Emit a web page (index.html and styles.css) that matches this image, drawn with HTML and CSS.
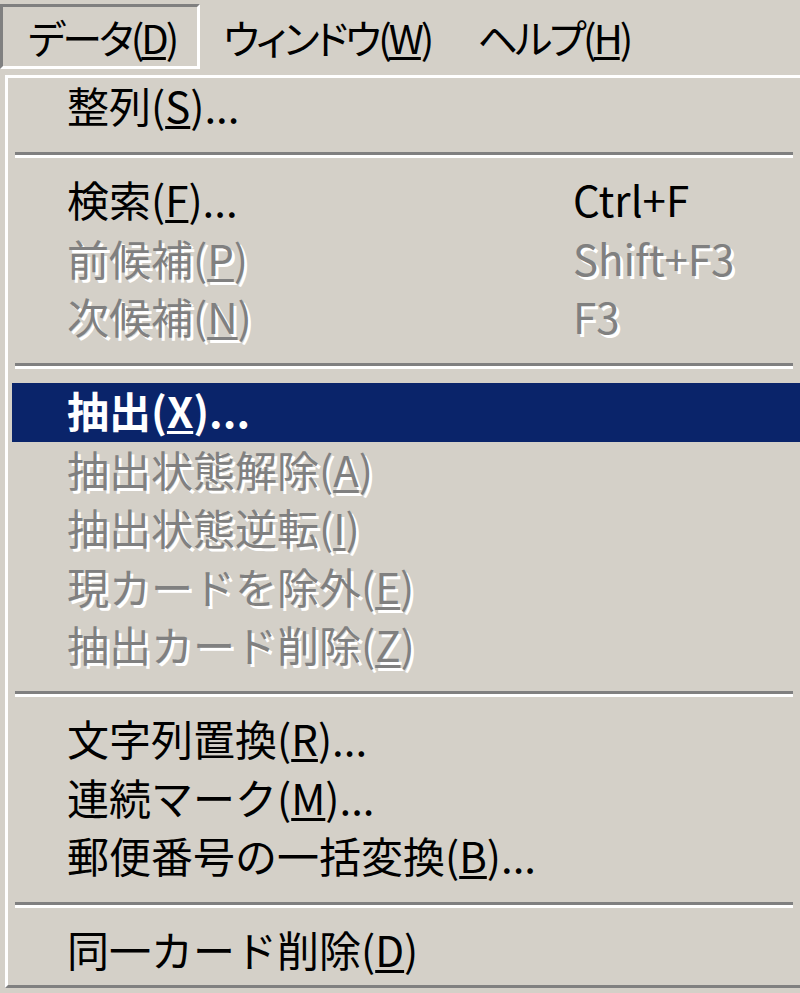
FILE: index.html
```html
<!DOCTYPE html>
<html lang="ja">
<head>
  <meta charset="UTF-8" />
  <meta name="viewport" content="width=device-width, initial-scale=1.0">
  <title>データメニュー</title>
  <link rel="stylesheet" href="styles.css">
</head>
<body>

  <div class="menubar">
    <div class="menubar-item pressed">データ(<u>D</u>)</div>
    <div class="menubar-item">ウィンドウ(<u>W</u>)</div>
    <div class="menubar-item">ヘルプ(<u>H</u>)</div>
  </div>

  <div class="menu">
    <div class="item"><span class="label">整列(<u>S</u>)...</span></div>
    <div class="sep"></div>
    <div class="item"><span class="label">検索(<u>F</u>)...</span><span class="key">Ctrl+F</span></div>
    <div class="item disabled"><span class="label">前候補(<u>P</u>)</span><span class="key">Shift+F3</span></div>
    <div class="item disabled"><span class="label">次候補(<u>N</u>)</span><span class="key">F3</span></div>
    <div class="sep"></div>
    <div class="item active"><span class="label">抽出(<u>X</u>)...</span></div>
    <div class="item disabled"><span class="label">抽出状態解除(<u>A</u>)</span></div>
    <div class="item disabled"><span class="label">抽出状態逆転(<u>I</u>)</span></div>
    <div class="item disabled"><span class="label">現カードを除外(<u>E</u>)</span></div>
    <div class="item disabled"><span class="label">抽出カード削除(<u>Z</u>)</span></div>
    <div class="sep"></div>
    <div class="item"><span class="label">文字列置換(<u>R</u>)...</span></div>
    <div class="item"><span class="label">連続マーク(<u>M</u>)...</span></div>
    <div class="item"><span class="label">郵便番号の一括変換(<u>B</u>)...</span></div>
    <div class="sep"></div>
    <div class="item"><span class="label">同一カード削除(<u>D</u>)</span></div>
  </div>

</body>
</html>
```

FILE: styles.css
```css
:root {
  --face: #d4d0c8;
  --shadow: #808080;
  --dark: #404040;
  --light: #fff;
  --select: #0a246a;
}

body {
  font-family: "Noto Sans CJK JP", sans-serif;
  font-size: 42px;
  color: #000;
  background: var(--face);
  margin: 0;
  padding: 0;
  overflow: hidden;
}

u {
  text-decoration-thickness: 3px;
  text-underline-offset: 3px;
}

/* menu bar */
.menubar {
  display: flex;
  height: 75px;
  padding-top: 4px;
  box-sizing: border-box;
}

.menubar-item {
  height: 65px;
  line-height: 60px;
  padding: 0 20px;
  box-sizing: border-box;
  font-size: 40px;
  font-feature-settings: "palt";
  letter-spacing: -3px;
  white-space: nowrap;
  border: 3px solid transparent;
}

.menubar-item.pressed {
  width: 200px;
  padding-left: 25px;
  border-top-color: var(--shadow);
  border-left-color: var(--shadow);
  border-right-color: var(--light);
  border-bottom-color: var(--light);
}

/* drop-down */
.menu {
  margin-left: 5px;
  width: 803px;
  box-sizing: border-box;
  border-top: 3px solid var(--light);
  border-left: 3px solid var(--light);
  border-right: 3px solid var(--dark);
  border-bottom: 3px solid var(--shadow);
  padding: 0 4px 4px 4px;
}

.item {
  display: flex;
  height: 58.5px;
  line-height: 53.5px;
  padding-left: 55px;
  white-space: nowrap;
}

.label {
  flex: 0 0 506px;
}

.item.active {
  background: var(--select);
  color: var(--light);
  font-weight: bold;
}

.item.disabled {
  color: var(--shadow);
  text-shadow: 3px 3px 0 var(--light);
}

.sep {
  height: 35.5px;
  padding-top: 15.5px;
  box-sizing: border-box;
  margin: 0 8px 0 3px;
}

.sep::before {
  content: "";
  display: block;
  border-top: 3px solid var(--shadow);
  border-bottom: 3px solid var(--light);
}
```
